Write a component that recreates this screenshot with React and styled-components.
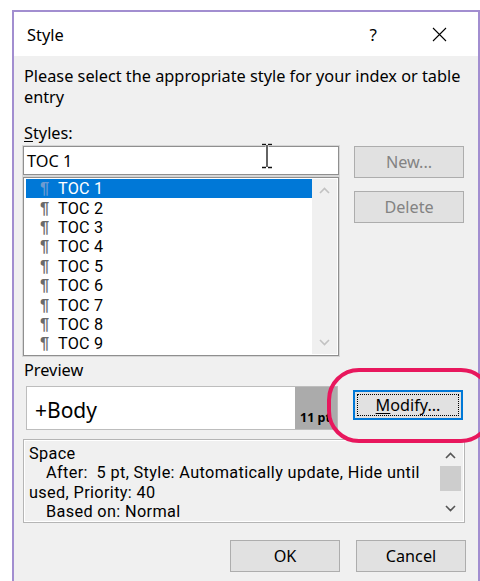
import React from 'react'
import styled, { createGlobalStyle } from 'styled-components'

const GlobalStyle = createGlobalStyle`
  html, body {
    margin: 0;
    padding: 0;
    background: #fff;
    overflow: hidden;
  }
  body {
    font-family: "Noto Sans", "Open Sans", sans-serif;
    color: #000;
  }
`;

const Page = styled.div`
  width: 480px;
  height: 581px;
  padding: 10px 0 0 12px;
  box-sizing: border-box;
  display: flex;
  align-items: flex-start;
  overflow: hidden;
`;

const Dialog = styled.div`
  width: 464px;
  flex-shrink: 0;
  border: 2px solid #a28ed0;
  border-bottom: none;
  display: flex;
  flex-direction: column;
  position: relative;
  box-shadow: 3px 0 0 #5a5a5a;
`;

const TitleBar = styled.div`
  height: 44px;
  flex-shrink: 0;
  background: #fff;
  display: flex;
  align-items: center;
  padding: 0 31px 0 13px;
  font-size: 16.4px;
`;

const Title = styled.div`
  flex: 1;
`;

const HelpMark = styled.div`
  font-size: 17px;
  margin-right: 55px;
`;

const Body = styled.div`
  background: #f0f0f0;
  padding: 10px 10px 20px 9px;
  font-size: 16.3px;
`;

const Intro = styled.div`
  line-height: 21px;
  padding-left: 1px;
`;

const Label = styled.div`
  line-height: 20px;
  padding-left: 1px;
  margin-top: ${p => p.top || 0}px;
`;

const Key = styled.span`
  text-decoration: underline;
  text-underline-offset: 2px;
`;

const StylesArea = styled.div`
  display: grid;
  grid-template-columns: 316px 110px;
  column-gap: 15px;
  margin-top: 3px;
`;

const LeftCol = styled.div`
  display: flex;
  flex-direction: column;
  gap: 2px;
`;

const InputWrap = styled.div`
  position: relative;
  height: 29px;
  background: #fff;
  border: 1px solid #8f8f8f;
  box-shadow: 0 0 0 1px #d6d6d6;
  box-sizing: border-box;
  display: flex;
  align-items: center;
  padding-left: 3px;
  font-size: 16.3px;
`;

const Cursor = styled.svg`
  position: absolute;
  left: 236px;
  top: -4px;
`;

const ListBox = styled.div`
  height: 179px;
  border: 1px solid #8f8f8f;
  box-shadow: 0 0 0 1px #d6d6d6;
  box-sizing: border-box;
  background: #fff;
  display: flex;
  padding: 1px 1px 1px 2px;
`;

const ListItems = styled.div`
  flex: 1;
  display: flex;
  flex-direction: column;
`;

const ListRow = styled.div`
  height: 19.4px;
  line-height: 19px;
  display: flex;
  align-items: center;
  padding-left: 14px;
  gap: 6px;
  background: ${p => (p.selected ? '#0078d7' : 'transparent')};
  color: ${p => (p.selected ? '#fff' : '#000')};
  font-family: Roboto, "Noto Sans", sans-serif;
  font-size: 16.2px;
  letter-spacing: 0.2px;
`;

const Pilcrow = styled.span`
  color: ${p => (p.selected ? '#6d9bd0' : '#6a6a6a')};
  font-family: "Liberation Sans", Arial, sans-serif;
  font-weight: 700;
  font-size: 16.5px;
  width: 12px;
`;

const ScrollTrack = styled.div`
  width: 25px;
  background: ${p => p.bg || '#f0f0f0'};
  display: flex;
  flex-direction: column;
  justify-content: space-between;
  align-items: center;
  padding: ${p => p.pad || '8px 0'};
  box-sizing: border-box;
`;

const ScrollThumb = styled.div`
  width: 21px;
  height: 25px;
  margin-top: 7px;
  background: #cdcdcd;
`;

const ButtonCol = styled.div`
  display: flex;
  flex-direction: column;
  gap: 13px;
`;

const Button = styled.div`
  width: 110px;
  height: ${p => p.h || 32}px;
  box-sizing: border-box;
  background: #e1e1e1;
  border: ${p => (p.focused ? '2px solid #0078d7' : '1px solid #adadad')};
  display: flex;
  align-items: center;
  justify-content: center;
  color: ${p => (p.disabled ? '#838383' : '#000')};
  font-size: 16.2px;
  position: relative;
`;

const FocusRing = styled.div`
  position: absolute;
  inset: 2px;
  border: 1px dotted #000;
`;

const PreviewRow = styled.div`
  display: flex;
  align-items: flex-start;
  margin-top: 6px;
  padding-left: 3px;
  gap: 15px;
`;

const PreviewBox = styled.div`
  width: 312px;
  height: 44px;
  box-sizing: border-box;
  border: 1px solid #bdbdbd;
  background: #fff;
  display: flex;
  overflow: hidden;
`;

const PreviewText = styled.div`
  flex: 1;
  font-size: 21px;
  display: flex;
  align-items: center;
  padding: 3px 0 0 8px;
`;

const SizeTag = styled.div`
  width: 42px;
  background: #ababab;
  font-size: 12.5px;
  font-weight: 700;
  display: flex;
  align-items: flex-end;
  padding: 0 0 3px 5px;
  box-sizing: border-box;
  white-space: nowrap;
  overflow: hidden;
`;

const ModifyWrap = styled.div`
  margin-top: 4px;
`;

const Highlight = styled.div`
  position: absolute;
  left: 313px;
  top: 356px;
  width: 166px;
  height: 75px;
  border: 4px solid #e8175d;
  border-radius: 32px;
  box-sizing: border-box;
  pointer-events: none;
`;

const Description = styled.div`
  margin-top: 9px;
  height: 84px;
  width: 442px;
  box-sizing: border-box;
  border: 1px solid #b5b5b5;
  box-shadow: inset 0 0 0 1px #fff;
  display: flex;
  padding: 1px;
`;

const DescText = styled.div`
  flex: 1;
  padding: 3px 0 0 4px;
  line-height: 19.3px;
  font-family: Roboto, "Noto Sans", sans-serif;
  font-size: 16.3px;
  letter-spacing: 0.35px;
  white-space: nowrap;
`;

const Indent = styled.div`
  padding-left: ${p => p.pad || 0}px;
`;

const Spacer = styled.div`
  flex: 1;
`;

const Footer = styled.div`
  display: flex;
  justify-content: flex-end;
  gap: 16px;
  margin-top: 17px;
  padding-right: 2px;
`;

const Chevron = ({ up, color }) => (
  <svg width="11" height="7" viewBox="0 0 11 7">
    <path
      d={up ? 'M1 6 L5.5 1.5 L10 6' : 'M1 1 L5.5 5.5 L10 1'}
      fill="none"
      stroke={color}
      strokeWidth="1.6"
    />
  </svg>
);

const CloseIcon = () => (
  <svg width="15" height="15" viewBox="0 0 15 15">
    <path d="M1 1 L14 14 M14 1 L1 14" stroke="#000" strokeWidth="1.1" />
  </svg>
);

const IBeam = () => (
  <svg width="14" height="26" viewBox="0 0 14 26">
    <path
      d="M2 1.5 H6 M8 1.5 H12 M7 2 V24 M2 24.5 H6 M8 24.5 H12"
      stroke="#fff"
      strokeWidth="3"
    />
    <path
      d="M2 1.5 H6 M8 1.5 H12 M7 2 V24 M2 24.5 H6 M8 24.5 H12"
      stroke="#111"
      strokeWidth="1.3"
    />
  </svg>
);

const tocStyles = [1, 2, 3, 4, 5, 6, 7, 8, 9];

export default function App() {
  return (
    <>
      <GlobalStyle />
      <Page>
        <Dialog>
          <TitleBar>
            <Title>Style</Title>
            <HelpMark>?</HelpMark>
            <CloseIcon />
          </TitleBar>
          <Body>
            <Intro>
              Please select the appropriate style for your index or table
              <br />
              entry
            </Intro>
            <Label top={15}>
              <Key>S</Key>tyles:
            </Label>
            <StylesArea>
              <LeftCol>
                <InputWrap>
                  TOC 1
                  <Cursor width="14" height="26">
                    <IBeam />
                  </Cursor>
                </InputWrap>
                <ListBox>
                  <ListItems>
                    {tocStyles.map(n => (
                      <ListRow key={n} selected={n === 1}>
                        <Pilcrow selected={n === 1}>¶</Pilcrow>
                        TOC {n}
                      </ListRow>
                    ))}
                  </ListItems>
                  <ScrollTrack>
                    <Chevron up color="#c2c2c2" />
                    <Chevron color="#c2c2c2" />
                  </ScrollTrack>
                </ListBox>
              </LeftCol>
              <ButtonCol>
                <Button disabled>New...</Button>
                <Button disabled>Delete</Button>
              </ButtonCol>
            </StylesArea>
            <Label top={4}>Preview</Label>
            <PreviewRow>
              <PreviewBox>
                <PreviewText>+Body</PreviewText>
                <SizeTag>11 pt</SizeTag>
              </PreviewBox>
              <ModifyWrap>
                <Button focused h={30}>
                  <FocusRing />
                  <span>
                    <Key>M</Key>odify...
                  </span>
                </Button>
              </ModifyWrap>
            </PreviewRow>
            <Description>
              <DescText>
                <div>Space</div>
                <Indent pad={17}>
                  After:&nbsp; 5 pt, Style: Automatically update, Hide until
                </Indent>
                <div>used, Priority: 40</div>
                <Indent pad={17}>Based on: Normal</Indent>
              </DescText>
              <ScrollTrack bg="#f0f0f0" pad="11px 0 9px">
                <Chevron up color="#555" />
                <ScrollThumb />
                <Spacer />
                <Chevron color="#555" />
              </ScrollTrack>
            </Description>
            <Footer>
              <Button>OK</Button>
              <Button>Cancel</Button>
            </Footer>
          </Body>
          <Highlight />
        </Dialog>
      </Page>
    </>
  );
}
